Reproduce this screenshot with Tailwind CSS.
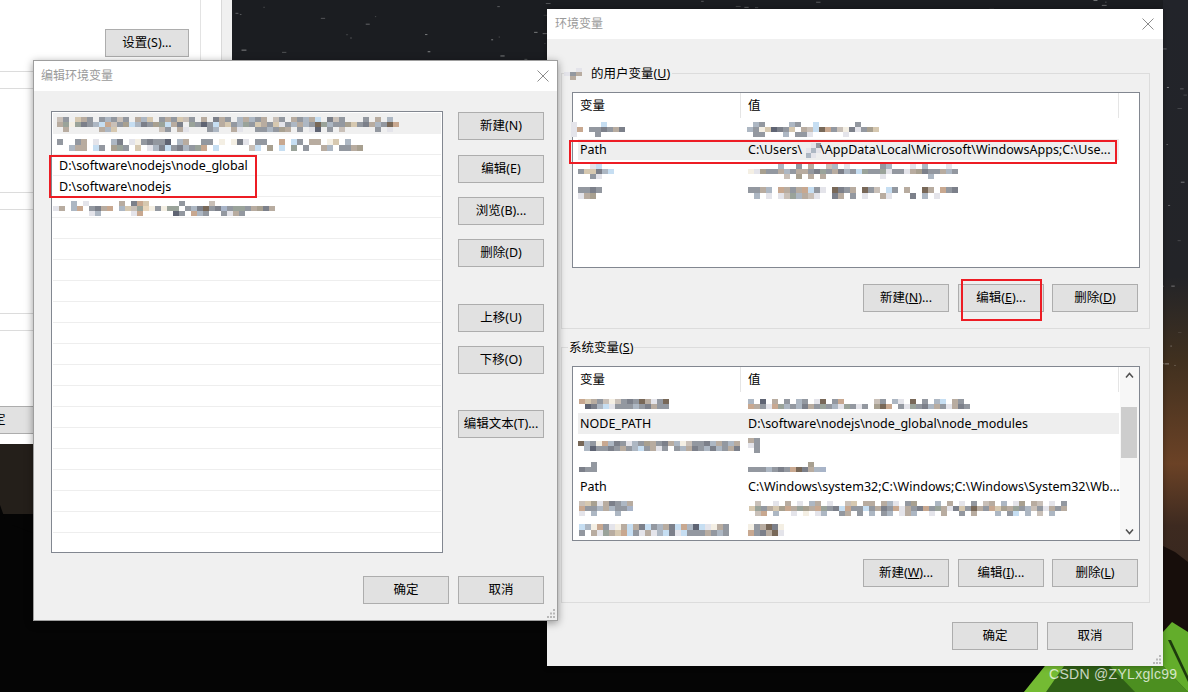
<!DOCTYPE html>
<html lang="zh">
<head>
<meta charset="utf-8">
<title>环境变量</title>
<script src="https://cdn.jsdelivr.net/npm/@tailwindcss/browser@4"></script>
</head>
<body class="m-0 bg-[#050505]">
<div class="relative w-[1188px] h-[692px] overflow-hidden text-[12.5px] leading-none text-black font-['Noto_Sans','Noto_Sans_CJK_SC',sans-serif]">

  <!-- wallpaper -->
  <svg id="wall" class="absolute inset-0" width="1188" height="692" viewBox="0 0 1188 692">
    <defs>
      <linearGradient id="sky" x1="0" y1="0" x2="0" y2="1">
        <stop offset="0" stop-color="#22242a"/>
        <stop offset="0.40" stop-color="#232428"/>
        <stop offset="0.52" stop-color="#40301f"/>
        <stop offset="0.67" stop-color="#6b4226"/>
        <stop offset="0.76" stop-color="#3d2a20"/>
        <stop offset="1" stop-color="#2a201c"/>
      </linearGradient>
    </defs>
    <rect x="0" y="0" width="1188" height="692" fill="#050505"/>
    <rect x="232" y="0" width="956" height="60" fill="#1b1d21"/>
    <rect x="1163" y="0" width="25" height="692" fill="url(#sky)"/>
    <rect x="0" y="444" width="33" height="70" fill="#241f1a"/>
    <polygon points="0,505 5,519 12,525 33,533 33,560 0,560" fill="#050505"/>
    <polygon points="1163,546 1175,552 1188,562 1188,692 1163,692" fill="#170e0b"/>
    <polygon points="1163,632 1172,622 1188,632 1188,692 1163,692" fill="#63ad2b"/>
    <polygon points="1045,666 1163,666 1188,692 1024,692" fill="#2f5f16"/>
    <polygon points="1045,666 1064,666 1046,692 1024,692" fill="#74bb33"/>
    <polygon points="1110,666 1163,666 1188,692 1135,692" fill="#4c8f20"/>
    <polygon points="1168,640 1171,640 1188,676 1188,682" fill="#1d3a0d"/>
  </svg>

  <!-- window behind -->
  <div class="absolute left-0 top-0 w-[232px] h-[444px] flex bg-[#f0f0f0]">
    <div class="w-[222px] border-r border-[#d9d9d9] bg-white flex flex-col">
      <div class="h-[406px] flex">
        <div class="w-[201px] border-r border-[#e3e3e3] flex flex-col">
          <div class="flex justify-end pt-[29px] pr-[11px]">
            <div class="flex items-center justify-center w-[84px] h-[28px] bg-[#e1e1e1] border border-[#adadad]">设置(S)...</div>
          </div>
          <div class="mt-[14px] h-[18px] border-y border-[#dcdcdc]"></div>
          <div class="mt-[103px] h-[18px] border-y border-[#dcdcdc]"></div>
          <div class="mt-[103px] h-[18px] border-y border-[#dcdcdc]"></div>
        </div>
      </div>
      <div class="h-[28px] bg-[#e1e1e1] border-y border-[#adadad] overflow-hidden flex items-center"><span class="-ml-[7px]">定</span></div>
    </div>
  </div>

  <!-- 环境变量 -->
  <div class="absolute left-[547px] top-[9px] w-[616px] h-[657px] bg-[#f0f0f0] shadow-[0_0_6px_rgba(0,0,0,0.35)] flex flex-col">
    <div class="h-[30px] bg-white flex items-center justify-between pl-[8px] pr-[9px] text-[#9a9a9a] text-[12px]">
      <span>环境变量</span>
      <svg width="12" height="12" viewBox="0 0 12 12" fill="none" stroke="#8c8c8c"><path d="M.5.5l11 11M11.5.5l-11 11"/></svg>
    </div>

    <div class="relative mt-[34px] ml-[14px] w-[589px] h-[256px] border border-[#dcdcdc]">
      <div class="absolute -top-[7px] left-[2px] flex items-center bg-[#f0f0f0] pr-[2px] h-[14px]">
        <svg data-m="..j.|jbg.|.g.." data-w="6" data-h="4" class="mr-[1px]"></svg><span class="ml-[2px]">的用户变量(<span class="underline">U</span>)</span>
      </div>
      <div class="absolute left-[10px] top-[18px] w-[568px] h-[176px] bg-white border border-[#828790] flex flex-col">
        <div class="h-[25px] flex shrink-0">
          <div class="w-[168px] border-r border-[#e5e5e5] pl-[7px] pt-[2px] flex items-center">变量</div>
          <div class="w-[378px] border-r border-[#e5e5e5] pl-[7px] pt-[2px] flex items-center">值</div>
        </div>
        <div class="h-[21px] pt-[2px] flex items-center">
          <div class="w-[168px] shrink-0 -ml-[2px]"><svg data-m="j....h....|jl.bbfbgf.|j...b....." data-w="6" data-h="5"></svg></div>
          <div class="pl-[8px]"><svg data-m=".cb....cb..h......b..|cbedifbd.gaholbaefjbnd|.bb...c.bbj.....j....." data-w="6" data-h="5"></svg></div>
        </div>
        <div class="h-[21px] pt-[2px] ml-[5px] w-[541px] bg-[#eeeeee] flex items-center">
          <div class="w-[163px] shrink-0 pl-[2px]">Path</div>
          <div class="flex items-center pl-[7px] whitespace-nowrap tracking-[0.02px]">C:\Users\<svg data-m="..jb|.jcj|.cj." data-w="5" data-h="5" class="-ml-[1px] -mr-[1px]"></svg>\AppData\Local\Microsoft\WindowsApps;C:\Use...</div>
        </div>
        <div class="h-[21px] pt-[2px] flex items-center">
          <div class="w-[175px] shrink-0 pl-[5px]"><svg data-m="..jh..|bddfch|..bj.." data-w="6" data-h="5"></svg></div>
          <div><svg data-m=".....c..b.g..ac.j.....bc...j.c...j..|ejnbbgcbggbfkbgfcbhkbbkjbbjgnfbbgcb|......a.n.g.g.........j.......c.." data-w="6" data-h="5"></svg></div>
        </div>
        <div class="h-[21px] pt-[2px] flex items-center">
          <div class="w-[175px] shrink-0 pl-[5px]"><svg data-m="bbfb..|jgn..." data-w="6" data-h="6"></svg></div>
          <div><svg data-m="bbgc.lgbglhbj.ofbg.oba.hb.g..og.lbf|.c.j.jakcgaj..fg.b.j..gj...f.c.j" data-w="6" data-h="6"></svg></div>
        </div>
      </div>
      <div class="absolute left-[301px] top-[210px] flex">
        <div class="flex items-center justify-center w-[86px] h-[28px] bg-[#e1e1e1] border border-[#adadad]">新建(<span class="underline">N</span>)...</div>
        <div class="ml-[9px] flex items-center justify-center w-[86px] h-[28px] bg-[#e1e1e1] border border-[#adadad]">编辑(<span class="underline">E</span>)...</div>
        <div class="ml-[8px] flex items-center justify-center w-[86px] h-[28px] bg-[#e1e1e1] border border-[#adadad]">删除(<span class="underline">D</span>)</div>
      </div>
    </div>

    <div class="relative mt-[18px] ml-[14px] w-[589px] h-[256px] border border-[#dcdcdc]">
      <div class="absolute -top-[7px] left-[6px] flex items-center bg-[#f0f0f0] px-[1px] h-[14px]">系统变量(<span class="underline">S</span>)</div>
      <div class="absolute left-[10px] top-[18px] w-[568px] h-[175px] bg-white border border-[#828790] flex">
        <div class="w-[547px] flex flex-col overflow-hidden">
          <div class="h-[25px] flex shrink-0">
            <div class="w-[168px] border-r border-[#e5e5e5] pl-[7px] pt-[2px] flex items-center">变量</div>
            <div class="w-[378px] border-r border-[#e5e5e5] pl-[7px] pt-[2px] flex items-center">值</div>
          </div>
          <div class="h-[21px] pt-[2px] flex items-center shrink-0">
            <div class="w-[168px] shrink-0 pl-[6px]"><svg data-m="ldgbaeabfbogjbo|.ifchjbbbcbfgbb." data-w="6" data-h="5"></svg></div>
            <div class="pl-[7px]"><svg data-m="c.i.g.b.cb.jo.bl.....ab.cj.o.b.ch.gb.|lgbjlkcbcfgbkbcjkbjb.nol.bjkbfcgbjgfb" data-w="6" data-h="5"></svg></div>
          </div>
          <div class="h-[21px] pt-[2px] ml-[5px] w-[541px] bg-[#eeeeee] flex items-center shrink-0">
            <div class="w-[163px] shrink-0 pl-[2px]">NODE_PATH</div>
            <div class="pl-[7px] whitespace-nowrap">D:\software\nodejs\node_global\node_modules</div>
          </div>
          <div class="h-[21px] pt-[2px] flex items-center shrink-0">
            <div class="w-[168px] shrink-0 pl-[5px]"><svg data-m="ocbelcfbjcbngbfgceabbfcgbcg|.cibbfbgbchbgjb.bcgfbcfcbgf" data-w="6" data-h="5"></svg></div>
            <div class="pl-[7px]"><svg data-m="gb|jb|.b" data-w="6" data-h="5"></svg></div>
          </div>
          <div class="h-[21px] pt-[2px] flex items-center shrink-0">
            <div class="w-[168px] shrink-0 pl-[6px]"><svg data-m="..b|fbb" data-w="6" data-h="5"></svg></div>
            <div class="pl-[7px]"><svg data-m="..........n..|bbbcbfblofgcq" data-w="6" data-h="5"></svg></div>
          </div>
          <div class="h-[21px] pt-[2px] flex items-center shrink-0">
            <div class="w-[168px] shrink-0 pl-[7px]">Path</div>
            <div class="pl-[7px] whitespace-nowrap tracking-[0.02px]">C:\Windows\system32;C:\Windows;C:\Windows\System32\Wb...</div>
          </div>
          <div class="h-[21px] pt-[2px] flex items-center shrink-0">
            <div class="w-[168px] shrink-0 pl-[6px]"><svg data-m="adnjgfbcg|lbbcgcbbq|j.c...c.." data-w="6" data-h="5"></svg></div>
            <div class="pl-[8px]"><svg data-m=".a..j.g.j.cg.j..ad.gg.gcj.bn...c.g.j.b.ag.c.jn.ga.j.b|dkbgdnlgknglkbfhlbbhbgfbljgbflbkgjfdbogbldngkbcabjgbg|.al.c..j.e.jc..bg.b.c.bc.jgc..j.g..b.g...c.bh.c.a.c.." data-w="6" data-h="5"></svg></div>
          </div>
          <div class="h-[21px] pt-[2px] flex items-center shrink-0">
            <div class="w-[168px] shrink-0 pl-[6px]"><svg data-m="hcelbjeghgfhbcgfhlcihjegb|b.gjkgdlhbjgjchfjhbbbgbcb" data-w="6" data-h="6"></svg></div>
            <div class="pl-[7px]"><svg data-m="ebgofe..|lbfgoj.." data-w="6" data-h="6"></svg></div>
          </div>
        </div>
        <div class="flex-1 flex flex-col items-center justify-between py-[5px] relative bg-[#f7f7f7]">
          <svg width="9" height="7" viewBox="0 0 9 7" fill="none" stroke="#505050" stroke-width="1.5"><path d="M1 5.5l3.5-4 3.5 4"/></svg>
          <svg width="9" height="7" viewBox="0 0 9 7" fill="none" stroke="#505050" stroke-width="1.5"><path d="M1 1.5l3.500 4 3.500-4"/></svg>
          <div class="absolute left-[1px] right-[2px] top-[40px] h-[51px] bg-[#cdcdcd]"></div>
        </div>
      </div>
      <div class="absolute left-[301px] top-[211px] flex">
        <div class="flex items-center justify-center w-[86px] h-[28px] bg-[#e1e1e1] border border-[#adadad]">新建(<span class="underline">W</span>)...</div>
        <div class="ml-[9px] flex items-center justify-center w-[86px] h-[28px] bg-[#e1e1e1] border border-[#adadad]">编辑(<span class="underline">I</span>)...</div>
        <div class="ml-[8px] flex items-center justify-center w-[86px] h-[28px] bg-[#e1e1e1] border border-[#adadad]">删除(<span class="underline">L</span>)</div>
      </div>
    </div>

    <div class="flex justify-end mt-[19px] pr-[30px]">
      <div class="flex items-center justify-center w-[86px] h-[28px] bg-[#e1e1e1] border border-[#adadad]">确定</div>
      <div class="ml-[9px] flex items-center justify-center w-[86px] h-[28px] bg-[#e1e1e1] border border-[#adadad]">取消</div>
    </div>
    <svg class="absolute right-[1px] bottom-[1px]" width="10" height="10" viewBox="0 0 10 10" fill="#b8b8b8"><path d="M7 0h2v2H7zM4 3.500h2v2H4zM7 3.500h2v2H7zM1 7h2v2H1zM4 7h2v2H4zM7 7h2v2H7z"/></svg>
  </div>

  <!-- red marks on 环境变量 -->
  <div class="absolute left-[569px] top-[140px] w-[548px] h-[24px] border-2 border-[#ed1c24]"></div>
  <div class="absolute left-[961px] top-[279px] w-[81px] h-[42px] border-2 border-[#ed1c24]"></div>

  <!-- 编辑环境变量 -->
  <div class="absolute left-[33px] top-[60px] w-[525px] h-[561px] bg-[#f0f0f0] border border-[#7a7a7a]/70 shadow-[0_2px_8px_rgba(0,0,0,0.4)] flex flex-col">
    <div class="h-[30px] bg-white flex items-center justify-between pl-[7px] pr-[8px] text-[#9a9a9a] text-[12px] shrink-0">
      <span>编辑环境变量</span>
      <svg width="12" height="12" viewBox="0 0 12 12" fill="none" stroke="#8c8c8c"><path d="M.5.5l11 11M11.5.5l-11 11"/></svg>
    </div>
    <div class="flex pl-[17px] pt-[20px]">
      <div class="w-[392px] h-[442px] bg-white border border-[#828790] pt-[1px] px-[1px] flex flex-col overflow-hidden">
        <div class="h-[21px] shrink-0 pt-[2px] bg-[#f0f0f0] flex items-center pl-[4px]"><svg data-m="ab.dgb.bcbab.gcd.bgbdab.g.fgb.cgcbg.ab.gbcgh.fab...b.g.c.|gkekfbchlabnhcfbnkhgf.kbibhgdbckbdgbdjbcgcbokcbbndbfgcbol|.g.....gcd.......ab.gj...bc..gj..bbcbng.b.ji.b.a.....b.j." data-w="6" data-h="5"></svg></div>
        <div class="h-[21px] shrink-0 pt-[2px] border-b border-[#eeeeee] flex items-center pl-[4px]"><svg data-m="b..bg.j..cf.jebfbbi.cg..bb.e.efj.bb..l.hb.gg.ed.c|..cgg.hb.nkb.d.jcfhbfcbkl.h.....ah.n.h.k.b..gc.bbgn" data-w="6" data-h="6"></svg></div>
        <div class="h-[21px] shrink-0 pt-[2px] border-b border-[#eeeeee] flex items-center pl-[6px]">D:\software\nodejs\node_global</div>
        <div class="h-[21px] shrink-0 pt-[2px] border-b border-[#eeeeee] flex items-center pl-[6px]">D:\software\nodejs</div>
        <div class="h-[21px] shrink-0 pt-[2px] border-b border-[#eeeeee] flex items-center -ml-[2px] pl-[2px]"><svg data-m="...c.j.....g.fld.....b....a.....|jg.cl.bfgl.cdakpebekk.bcfobfqbkkbgnfg|......jc.....jl.....ib.lcb..bjgb.." data-w="6" data-h="5"></svg></div>
        <div class="h-[21px] shrink-0 border-b border-[#eeeeee]"></div>
        <div class="h-[21px] shrink-0 border-b border-[#eeeeee]"></div>
        <div class="h-[21px] shrink-0 border-b border-[#eeeeee]"></div>
        <div class="h-[21px] shrink-0 border-b border-[#eeeeee]"></div>
        <div class="h-[21px] shrink-0 border-b border-[#eeeeee]"></div>
        <div class="h-[21px] shrink-0 border-b border-[#eeeeee]"></div>
        <div class="h-[21px] shrink-0 border-b border-[#eeeeee]"></div>
        <div class="h-[21px] shrink-0 border-b border-[#eeeeee]"></div>
        <div class="h-[21px] shrink-0 border-b border-[#eeeeee]"></div>
        <div class="h-[21px] shrink-0 border-b border-[#eeeeee]"></div>
        <div class="h-[21px] shrink-0 border-b border-[#eeeeee]"></div>
        <div class="h-[21px] shrink-0 border-b border-[#eeeeee]"></div>
        <div class="h-[21px] shrink-0 border-b border-[#eeeeee]"></div>
        <div class="h-[21px] shrink-0 border-b border-[#eeeeee]"></div>
        <div class="h-[21px] shrink-0 border-b border-[#eeeeee]"></div>
      </div>
      <div class="ml-[15px] flex flex-col pt-[1px]">
        <div class="flex items-center justify-center w-[86px] h-[28px] bg-[#e1e1e1] border border-[#adadad]">新建(N)</div>
        <div class="mt-[15px] flex items-center justify-center w-[86px] h-[28px] bg-[#e1e1e1] border border-[#adadad]">编辑(E)</div>
        <div class="mt-[14px] flex items-center justify-center w-[86px] h-[28px] bg-[#e1e1e1] border border-[#adadad]">浏览(B)...</div>
        <div class="mt-[14px] flex items-center justify-center w-[86px] h-[28px] bg-[#e1e1e1] border border-[#adadad]">删除(D)</div>
        <div class="mt-[37px] flex items-center justify-center w-[86px] h-[28px] bg-[#e1e1e1] border border-[#adadad]">上移(U)</div>
        <div class="mt-[14px] flex items-center justify-center w-[86px] h-[28px] bg-[#e1e1e1] border border-[#adadad]">下移(O)</div>
        <div class="mt-[36px] flex items-center justify-center w-[86px] h-[28px] bg-[#e1e1e1] border border-[#adadad]">编辑文本(T)...</div>
      </div>
    </div>
    <div class="flex justify-end mt-[23px] pr-[13px]">
      <div class="flex items-center justify-center w-[86px] h-[28px] bg-[#e1e1e1] border border-[#adadad]">确定</div>
      <div class="ml-[9px] flex items-center justify-center w-[86px] h-[28px] bg-[#e1e1e1] border border-[#adadad]">取消</div>
    </div>
    <svg class="absolute right-[1px] bottom-[1px]" width="10" height="10" viewBox="0 0 10 10" fill="#b8b8b8"><path d="M7 0h2v2H7zM4 3.500h2v2H4zM7 3.500h2v2H7zM1 7h2v2H1zM4 7h2v2H4zM7 7h2v2H7z"/></svg>
  </div>
  <div class="absolute left-[49px] top-[155px] w-[208px] h-[43px] border-2 border-[#ed1c24]"></div>

  <div class="absolute left-[1049px] top-[666px] text-[14px] leading-[16px] tracking-[0.3px] text-white/75 whitespace-nowrap font-['Liberation_Sans',sans-serif]">CSDN @ZYLxglc99</div>
</div>

<script>
  // Pixelated (blurred-out) values in the screenshot, one letter per mosaic cell.
  const palette = {a:'#c9c0b8',b:'#9398a0',c:'#adb7c3',d:'#d6c8b0',e:'#f4efe4',f:'#7c808a',g:'#b8aca0',h:'#c6def2',i:'#5f6473',j:'#e4e4ea',k:'#9aa39a',l:'#c8a890',n:'#a8a090',o:'#786858',p:'#e8d6bc',q:'#a8b4c8'};
  const NS = 'http://www.w3.org/2000/svg';
  document.querySelectorAll('svg[data-m]').forEach(svg => {
    const rows = svg.dataset.m.split('|').filter(Boolean);
    const w = +svg.dataset.w, h = +svg.dataset.h;
    const cols = Math.max(...rows.map(r => r.length));
    svg.setAttribute('width', cols * w);
    svg.setAttribute('height', rows.length * h);
    svg.setAttribute('shape-rendering', 'crispEdges');
    rows.forEach((row, y) => [...row].forEach((c, x) => {
      if (!palette[c]) return;
      const r = document.createElementNS(NS, 'rect');
      r.setAttribute('x', x * w); r.setAttribute('y', y * h);
      r.setAttribute('width', w); r.setAttribute('height', h);
      r.setAttribute('fill', palette[c]);
      svg.appendChild(r);
    }));
  });
  // Stars on the wallpaper
  const wall = document.getElementById('wall');
  let seed = 7;
  const rnd = () => (seed = (seed * 16807) % 2147483647) / 2147483647;
  for (let i = 0; i < 700; i++) {
    const s = document.createElementNS(NS, 'rect');
    const x = rnd() * 1188, y = rnd() * 430;
    s.setAttribute('x', x); s.setAttribute('y', y);
    s.setAttribute('width', 1 + rnd() * 4); s.setAttribute('height', 1);
    s.setAttribute('fill', '#ffffff'); s.setAttribute('opacity', 0.1 + rnd() * 0.35);
    wall.appendChild(s);
  }
</script>
</body>
</html>
